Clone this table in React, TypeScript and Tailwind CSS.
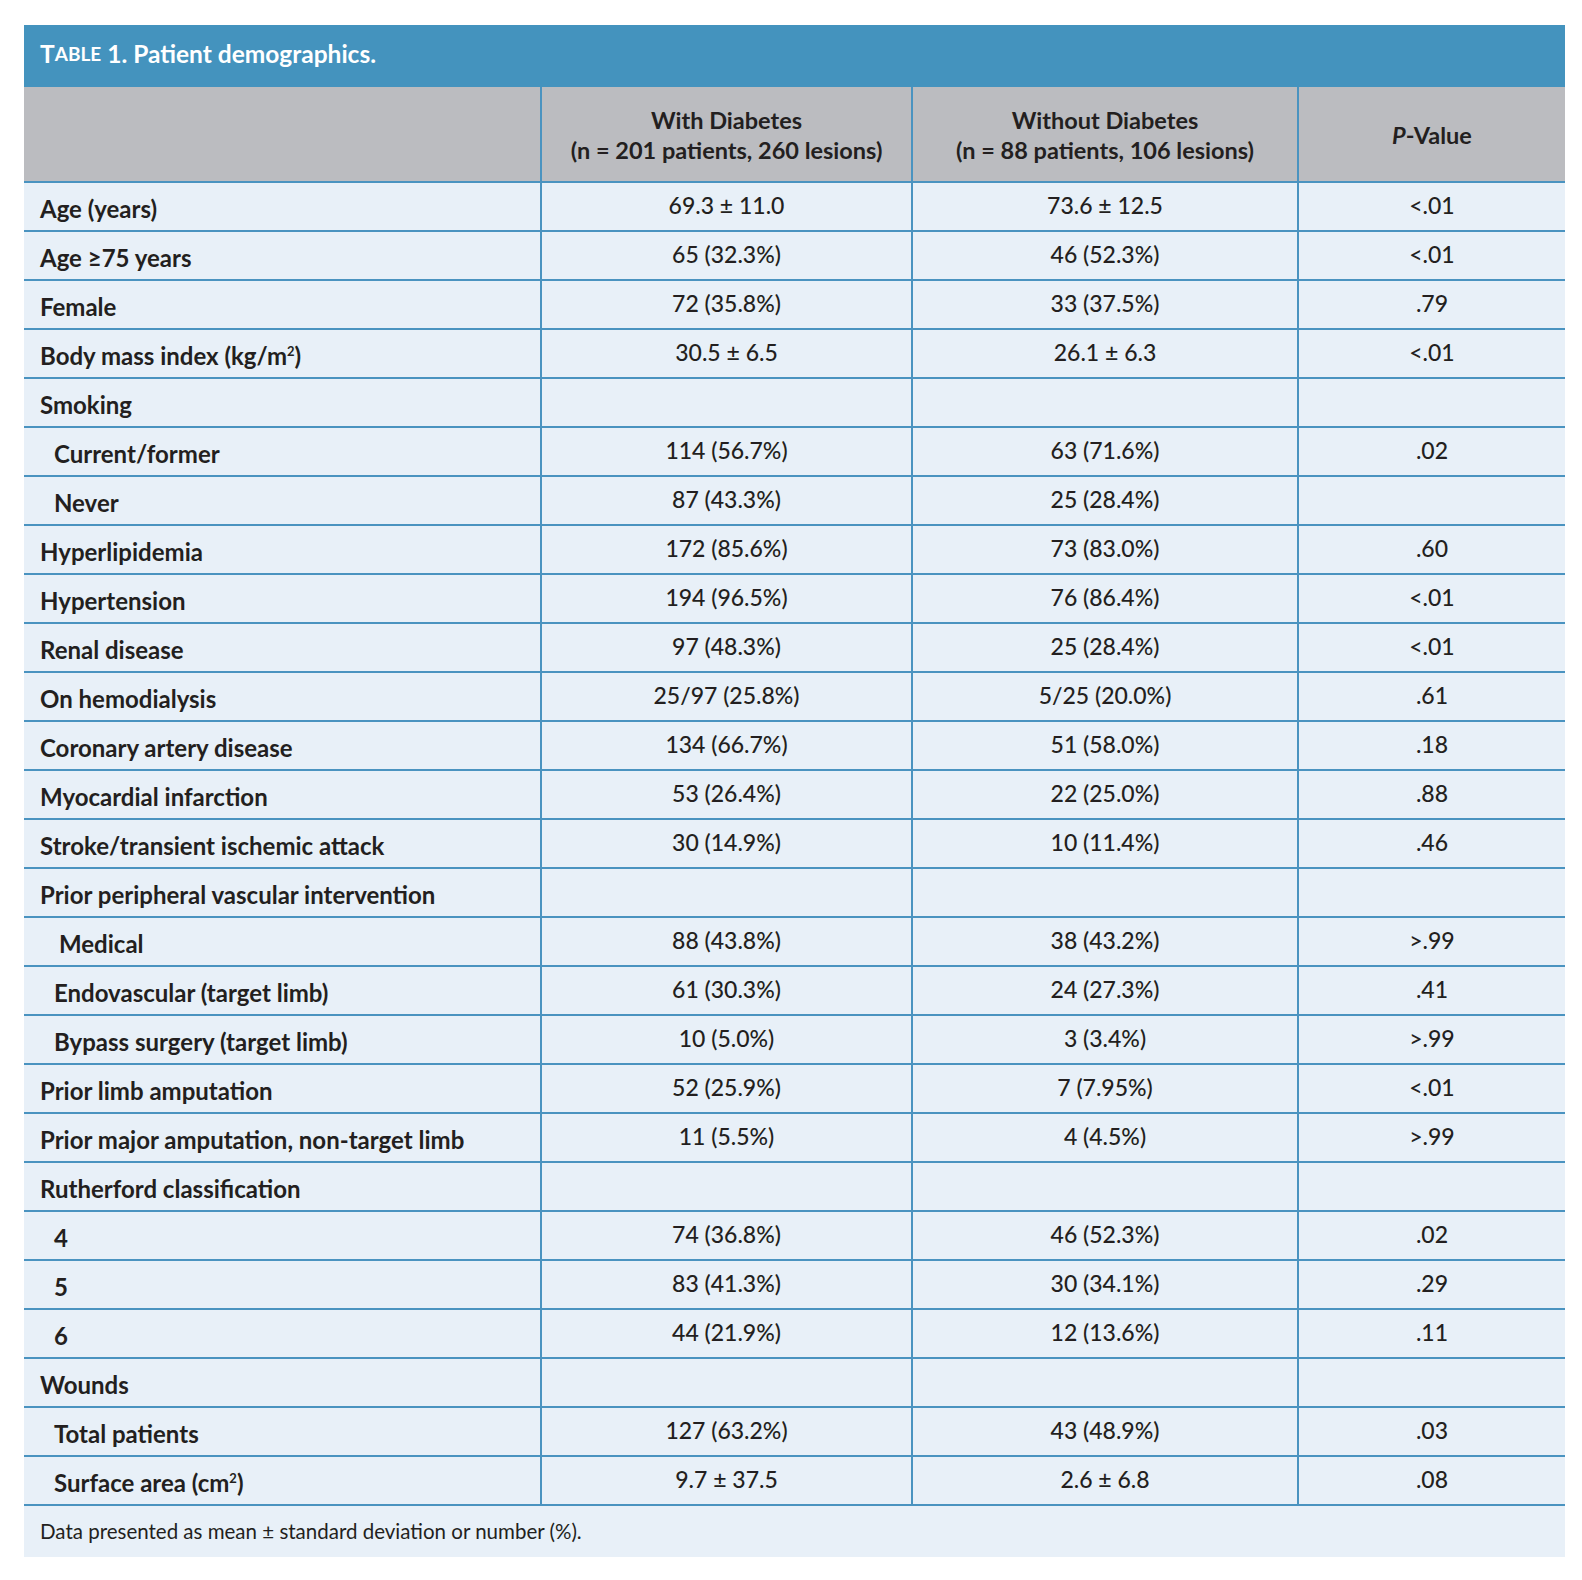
import type { ReactNode } from "react";

type Row = {
  label: ReactNode;
  a: string;
  b: string;
  p: string;
  indent?: "sm" | "md";
};

const sq = <sup className="relative -top-[9px] text-[13px]">2</sup>;

const rows: Row[] = [
  { label: "Age (years)", a: "69.3 ± 11.0", b: "73.6 ± 12.5", p: "<.01" },
  { label: "Age ≥75 years", a: "65 (32.3%)", b: "46 (52.3%)", p: "<.01" },
  { label: "Female", a: "72 (35.8%)", b: "33 (37.5%)", p: ".79" },
  { label: <>Body mass index (kg/m{sq})</>, a: "30.5 ± 6.5", b: "26.1 ± 6.3", p: "<.01" },
  { label: "Smoking", a: "", b: "", p: "" },
  { label: "Current/former", a: "114 (56.7%)", b: "63 (71.6%)", p: ".02", indent: "sm" },
  { label: "Never", a: "87 (43.3%)", b: "25 (28.4%)", p: "", indent: "sm" },
  { label: "Hyperlipidemia", a: "172 (85.6%)", b: "73 (83.0%)", p: ".60" },
  { label: "Hypertension", a: "194 (96.5%)", b: "76 (86.4%)", p: "<.01" },
  { label: "Renal disease", a: "97 (48.3%)", b: "25 (28.4%)", p: "<.01" },
  { label: "On hemodialysis", a: "25/97 (25.8%)", b: "5/25 (20.0%)", p: ".61" },
  { label: "Coronary artery disease", a: "134 (66.7%)", b: "51 (58.0%)", p: ".18" },
  { label: "Myocardial infarction", a: "53 (26.4%)", b: "22 (25.0%)", p: ".88" },
  { label: "Stroke/transient ischemic attack", a: "30 (14.9%)", b: "10 (11.4%)", p: ".46" },
  { label: "Prior peripheral vascular intervention", a: "", b: "", p: "" },
  { label: "Medical", a: "88 (43.8%)", b: "38 (43.2%)", p: ">.99", indent: "md" },
  { label: "Endovascular (target limb)", a: "61 (30.3%)", b: "24 (27.3%)", p: ".41", indent: "sm" },
  { label: "Bypass surgery (target limb)", a: "10 (5.0%)", b: "3 (3.4%)", p: ">.99", indent: "sm" },
  { label: "Prior limb amputation", a: "52 (25.9%)", b: "7 (7.95%)", p: "<.01" },
  { label: "Prior major amputation, non-target limb", a: "11 (5.5%)", b: "4 (4.5%)", p: ">.99" },
  { label: "Rutherford classification", a: "", b: "", p: "" },
  { label: "4", a: "74 (36.8%)", b: "46 (52.3%)", p: ".02", indent: "sm" },
  { label: "5", a: "83 (41.3%)", b: "30 (34.1%)", p: ".29", indent: "sm" },
  { label: "6", a: "44 (21.9%)", b: "12 (13.6%)", p: ".11", indent: "sm" },
  { label: "Wounds", a: "", b: "", p: "" },
  { label: "Total patients", a: "127 (63.2%)", b: "43 (48.9%)", p: ".03", indent: "sm" },
  { label: <>Surface area (cm{sq})</>, a: "9.7 ± 37.5", b: "2.6 ± 6.8", p: ".08", indent: "sm" },
];

const cols = "grid grid-cols-[516px_371px_386px_292px]";

export default function App() {
  return (
    <div className="min-h-[1580px] bg-white pt-[25px] pl-[24px] font-['Lato',sans-serif] text-[#231f20]">
      <div className="w-[1541px] overflow-hidden">
        <div className="flex h-[62px] items-center bg-[#4493be] pb-[3px] pl-[16px] text-[24.5px] font-bold text-white">
          <span>T</span>
          <span className="text-[19px]">ABLE</span>
          <span className="ml-[6px]">1. Patient demographics.</span>
        </div>

        <div className={`${cols} h-[94px] bg-[#bbbcc0] text-[23.5px] font-bold leading-[30px]`}>
          <div />
          <div className="flex flex-col items-center justify-center border-l-2 border-[#4a93c0] pt-[2px]">
            <span>With Diabetes</span>
            <span>(n = 201 patients, 260 lesions)</span>
          </div>
          <div className="flex flex-col items-center justify-center border-l-2 border-[#4a93c0] pt-[2px]">
            <span>Without Diabetes</span>
            <span>(n = 88 patients, 106 lesions)</span>
          </div>
          <div className="flex items-center justify-center border-l-2 border-[#4a93c0] pr-[24px] pt-[2px]">
            <span>
              <i>P</i>-Value
            </span>
          </div>
        </div>

        {rows.map((r, i) => (
          <div key={i} className={`${cols} h-[49px] border-t-2 border-[#4a93c0] bg-[#e8f0f8] text-[23px]`}>
            <div
              className={`flex items-center pt-[5px] text-[24px] font-bold ${
                r.indent === "md" ? "pl-[35px]" : r.indent === "sm" ? "pl-[30px]" : "pl-[16px]"
              }`}
            >
              <span>{r.label}</span>
            </div>
            <div className="flex items-center justify-center border-l-2 border-[#4a93c0] pb-[2px] font-medium">
              {r.a}
            </div>
            <div className="flex items-center justify-center border-l-2 border-[#4a93c0] pb-[2px] font-medium">
              {r.b}
            </div>
            <div className="flex items-center justify-center border-l-2 border-[#4a93c0] pb-[2px] pr-[24px] font-medium">
              {r.p}
            </div>
          </div>
        ))}

        <div className="flex h-[53px] w-[1541px] items-center border-t-2 border-[#4a93c0] bg-[#e8f0f8] pl-[16px] text-[20.5px]">
          Data presented as mean ± standard deviation or number (%).
        </div>
      </div>
    </div>
  );
}
